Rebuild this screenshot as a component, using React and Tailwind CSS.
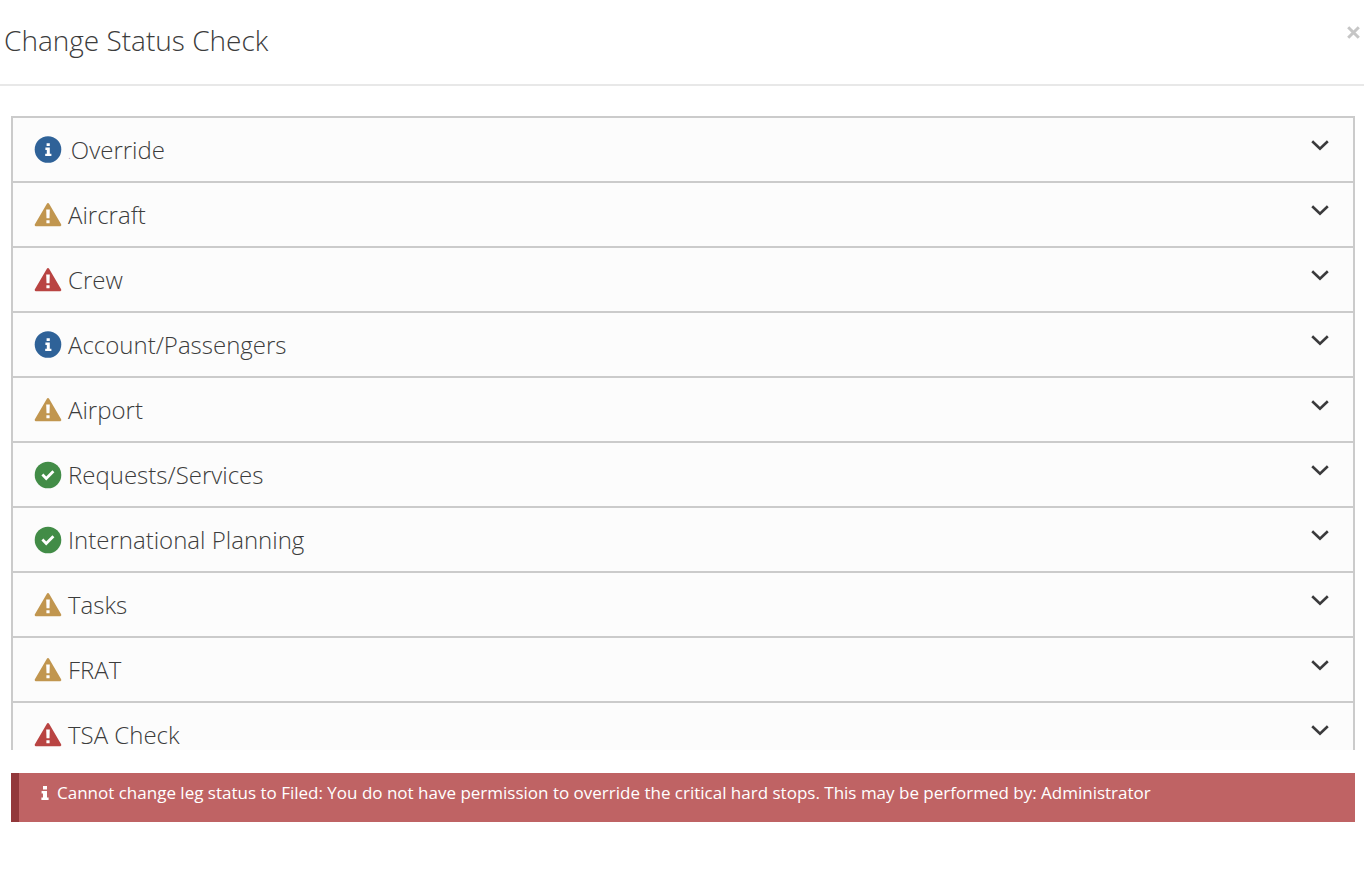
import { useState } from 'react';

const checks = [
  { id: 'override', label: 'Override', status: 'info', prefix: '.' },
  { id: 'aircraft', label: 'Aircraft', status: 'warning' },
  { id: 'crew', label: 'Crew', status: 'critical' },
  { id: 'account', label: 'Account/Passengers', status: 'info' },
  { id: 'airport', label: 'Airport', status: 'warning' },
  { id: 'requests', label: 'Requests/Services', status: 'ok' },
  { id: 'international', label: 'International Planning', status: 'ok' },
  { id: 'tasks', label: 'Tasks', status: 'warning' },
  { id: 'frat', label: 'FRAT', status: 'warning' },
  { id: 'tsa', label: 'TSA Check', status: 'critical' },
];

const statusColors = {
  info: 'text-[#2f6298]',
  warning: 'text-[#c1964f]',
  critical: 'text-[#b94442]',
  ok: 'text-[#428c47]',
};

const InfoCircle = () => (
  <>
    <circle cx="14" cy="13.5" r="13.3" fill="currentColor" />
    <path d="M12.6 7.2h3.2v2.9h-3.2zM11.4 11.6h4.4v6.1h1.6V20h-6.2v-2.3h1.6v-3.8h-1.4z" fill="#fff" />
  </>
);

const CheckCircle = () => (
  <>
    <circle cx="14" cy="14" r="13.3" fill="currentColor" />
    <path d="M8.4 13.6l3.8 3.8 7.2-7.2" fill="none" stroke="#fff" strokeWidth="2.8" />
  </>
);

const Triangle = () => (
  <>
    <path
      d="M14 3.4L26 24H2z"
      fill="currentColor"
      stroke="currentColor"
      strokeWidth="2.6"
      strokeLinejoin="round"
    />
    <path d="M12.2 8.6h3.6l-.3 8.6h-3zM12.4 19.2h3.2v3h-3.2z" fill="#fff" />
  </>
);

const StatusIcon = ({ status }) => (
  <svg viewBox="0 0 28 28" className={`size-7 shrink-0 ${statusColors[status]}`} aria-hidden="true">
    {status === 'info' && <InfoCircle />}
    {status === 'ok' && <CheckCircle />}
    {(status === 'warning' || status === 'critical') && <Triangle />}
  </svg>
);

const CheckRow = ({ check, open, onToggle }) => (
  <li className="border-t-2 border-[#cbcbcb]">
    <button
      type="button"
      aria-expanded={open}
      onClick={onToggle}
      className="flex h-[63px] w-full items-start justify-between pl-[21px] pr-6 text-left"
    >
      <span className="flex items-center gap-1.5 pt-[18px]">
        <StatusIcon status={check.status} />
        <span className="text-2xl leading-7">
          {check.prefix && <span className="text-xs text-[#9a8aa8]">{check.prefix}</span>}
          {check.label}
        </span>
      </span>
      <svg viewBox="0 0 18 11" className="mt-[22px] h-[11px] w-[18px]" fill="none" aria-hidden="true">
        <path d="M1.2 1.2L9 8.8l7.8-7.6" stroke="#3a3a3c" strokeWidth="2.6" />
      </svg>
    </button>
  </li>
);

const App = () => {
  const [openId, setOpenId] = useState(null);

  return (
    <div className="min-h-screen bg-white font-['Open_Sans',sans-serif] font-light text-[#3c3c3c]">
      <header className="flex items-start justify-between border-b-2 border-[#e8e8e8] pb-[26px] pl-1 pr-0.5 pt-[22px]">
        <h1 className="text-[28px] leading-9">Change Status Check</h1>
        <button type="button" aria-label="Close" className="px-0.5 py-1 text-[#c6c6c6]">
          <svg viewBox="0 0 13 13" className="size-[13px]" fill="none" aria-hidden="true">
            <path d="M1.2 1.2l10.6 10.6M11.8 1.2L1.2 11.8" stroke="currentColor" strokeWidth="3" />
          </svg>
        </button>
      </header>

      <main className="pl-[11px] pr-[9px] pt-[30px]">
        <ul className="max-h-[634px] overflow-hidden border-x-2 border-[#cbcbcb] bg-[#fcfcfc]">
          {checks.map((check) => (
            <CheckRow
              key={check.id}
              check={check}
              open={openId === check.id}
              onToggle={() => setOpenId(openId === check.id ? null : check.id)}
            />
          ))}
        </ul>

        <div
          role="alert"
          className="mt-[23px] flex items-start gap-2 border-l-8 border-[#93383b] bg-[#bf6364] pb-[17px] pl-[22px] pr-4 pt-[7px] font-medium text-white"
        >
          <svg viewBox="0 0 8 14" className="mt-1.5 h-3.5 w-2 shrink-0" fill="currentColor" aria-hidden="true">
            <path d="M2 0h4v3.4H2zM.6 5H6v6.6h1.6V14H.4v-2.4H2V7.4H.6z" />
          </svg>
          <p className="text-[17px] leading-[25px]">
            Cannot change leg status to Filed: You do not have permission to override the critical hard stops. This may
            be performed by: Administrator
          </p>
        </div>
      </main>
    </div>
  );
};

export default App;
